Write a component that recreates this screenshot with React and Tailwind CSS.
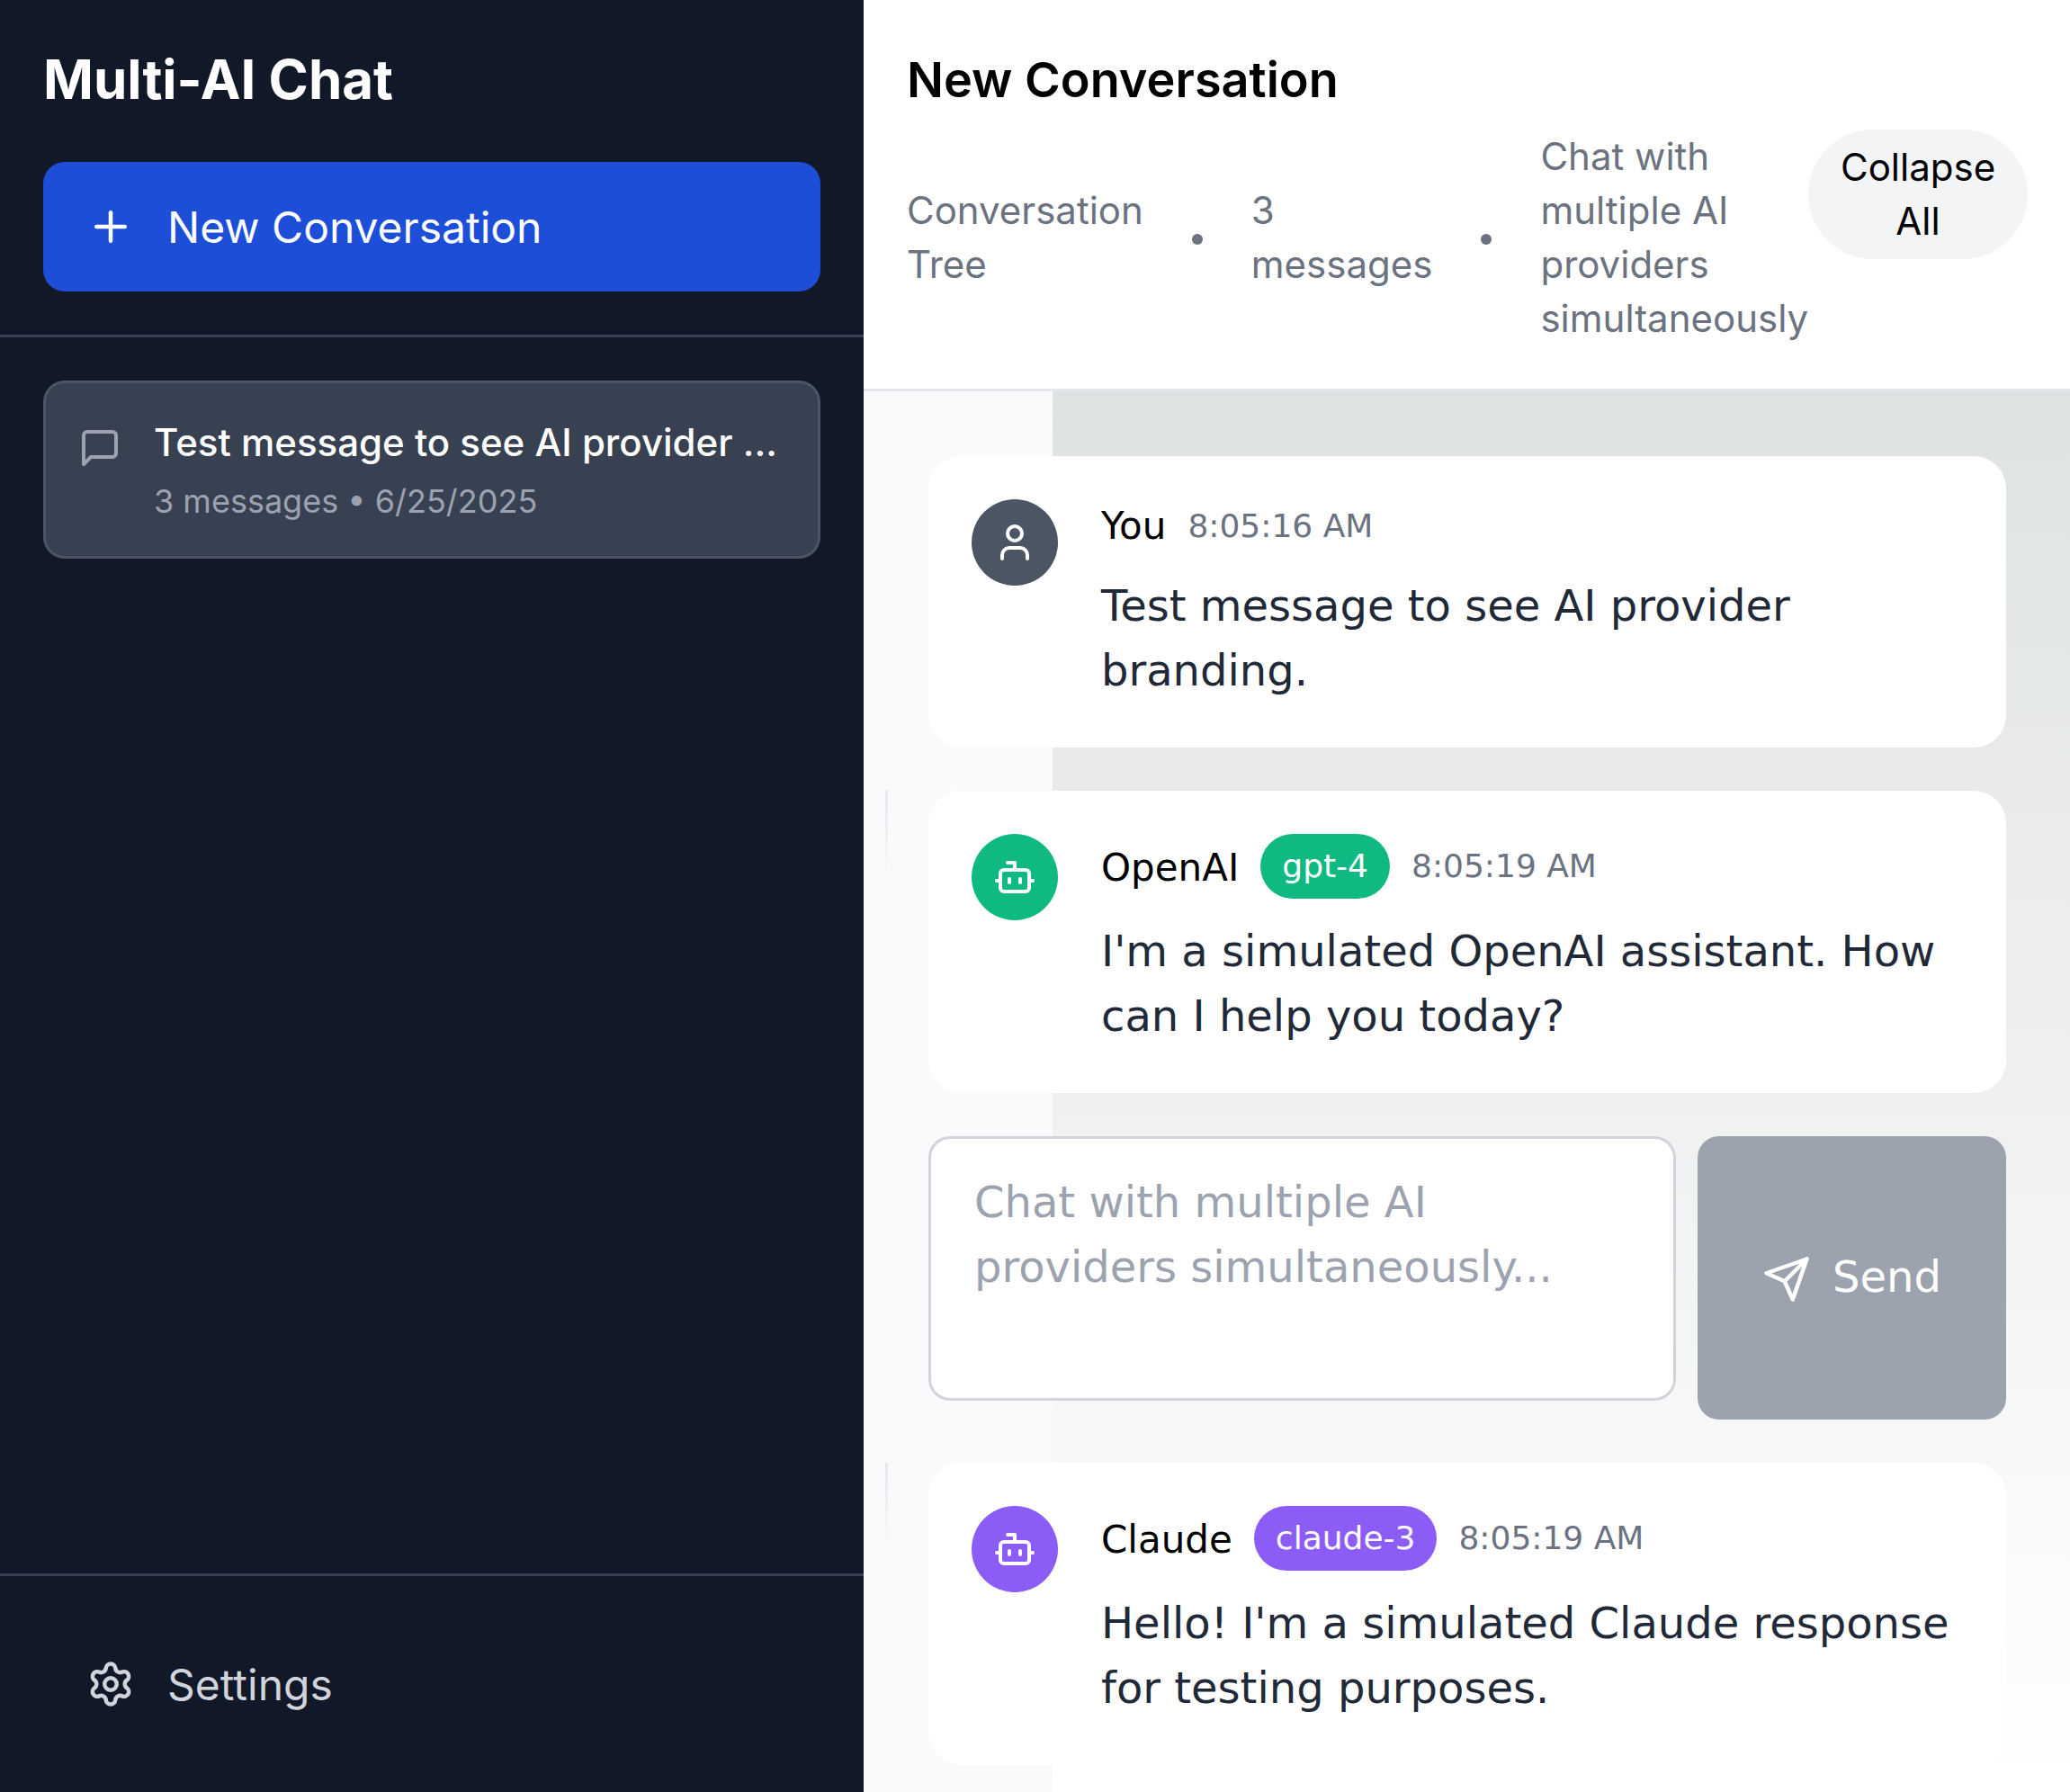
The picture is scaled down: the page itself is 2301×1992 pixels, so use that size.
import React from "react";
import { Plus, Settings, User, Bot } from "lucide-react";

const inter = "font-['Inter',sans-serif]";

const ChatIcon = () => (
  <svg width="48" height="48" viewBox="0 0 24 24" fill="none" stroke="#9ca3af" strokeWidth="2" strokeLinecap="round" strokeLinejoin="round" className="mt-3 shrink-0">
    <path d="M21 15a2 2 0 0 1-2 2H7l-4 4V5a2 2 0 0 1 2-2h14a2 2 0 0 1 2 2z" />
  </svg>
);

const SendIcon = () => (
  <svg width="54" height="54" viewBox="0 0 24 24" fill="none" stroke="currentColor" strokeWidth="2" strokeLinecap="round" strokeLinejoin="round" className="mt-[2px] shrink-0">
    <path d="m22 2-7 20-4-9-9-4Z" />
    <path d="M22 2 11 13" />
  </svg>
);

const Sidebar = () => (
  <aside className={`${inter} w-[960px] shrink-0 h-[1992px] bg-[#111827] flex flex-col`}>
    <div className="p-12 border-b-[3px] border-[#374151]">
      <h1 className="text-[60px] leading-[81px] font-bold text-white">Multi-AI Chat</h1>
      <button className="mt-[51px] w-full h-[144px] bg-[#1d4ed8] rounded-[24px] flex items-center gap-9 px-12 text-white text-[48px]">
        <Plus size={54} strokeWidth={2} />
        <span className="mt-[2px]">New Conversation</span>
      </button>
    </div>
    <div className="flex-1 p-12">
      <div className="bg-[#374151] border-[3px] border-[#4b5563] rounded-[24px] px-9 py-9 flex gap-9">
        <ChatIcon />
        <div className="min-w-0 flex-1">
          <div className="truncate text-[42px] leading-[60px] font-medium text-white">
            Test message to see AI provider branding.
          </div>
          <div className="mt-[11px] mb-[1px] text-[36px] leading-[48px] text-[#9ca3af]">3 messages • 6/25/2025</div>
        </div>
      </div>
    </div>
    <div className="border-t-[3px] border-[#374151] p-12">
      <button className="w-full h-[144px] flex items-center gap-9 px-12 text-[#d1d5db] text-[48px]">
        <Settings size={54} strokeWidth={2} />
        <span className="mt-[2px]">Settings</span>
      </button>
    </div>
  </aside>
);

const Badge = ({ color, children }) => (
  <span className={`${color} text-white text-[36px] leading-[48px] px-6 py-3 rounded-full`}>{children}</span>
);

const Message = ({ avatar, icon, name, model, modelColor, time, lines, thread }) => (
  <div className="relative">
    {thread && (
      <div className="absolute left-[-48px] top-0 w-[3px] h-[96px] bg-gradient-to-b from-[#e5e7eb] to-transparent" />
    )}
    <div className="bg-white rounded-[36px] p-12 flex gap-12">
      <div className={`${avatar} w-24 h-24 rounded-full shrink-0 flex items-center justify-center text-white`}>{icon}</div>
      <div className="flex-1 min-w-0">
        <div className="flex items-center gap-6 mb-[22px]">
          <span className={model ? "mt-[3px] text-[42px] leading-[60px] text-black" : "text-[42px] leading-[60px] text-black"}>{name}</span>
          {model && <Badge color={modelColor}>{model}</Badge>}
          <span className="text-[36px] leading-[48px] text-[#6b7280]">{time}</span>
        </div>
        <p className="mb-[2px] text-[48px] leading-[72px] text-[#1f2937]">{lines}</p>
      </div>
    </div>
  </div>
);

const Dot = () => <span className="w-3 h-3 shrink-0 mt-1 rounded-full bg-[#6b7280]" />;

export default function App() {
  return (
    <div className="flex w-[2301px] h-[1992px] overflow-hidden font-['DejaVu_Sans',sans-serif]">
      <Sidebar />
      <main className="flex-1 min-w-0 flex flex-col bg-[#f9fafb]">
        <header className={`${inter} bg-white border-b-[3px] border-[#e5e7eb] pl-12 pr-[47px] py-12`}>
          <h2 className="text-[54px] leading-[82px] font-semibold text-black">New Conversation</h2>
          <div className="mt-[14px] flex items-start justify-between text-[42px] leading-[60px] text-[#6b7280]">
            <div className="flex items-center gap-[54px] w-[1002px]">
              <span className="w-min">Conversation Tree</span>
              <Dot />
              <span className="w-min">3 messages</span>
              <Dot />
              <span className="w-min">Chat with multiple AI providers simultaneously</span>
            </div>
            <button className="w-[244px] px-9 py-3 rounded-[72px] bg-[#f3f4f6] text-black text-center">Collapse All</button>
          </div>
        </header>
        <div className="relative flex-1 min-h-0 overflow-hidden pl-[72px] pr-[71px] py-[72px]">
          <div className="absolute left-[210px] right-0 top-0 bottom-0 bg-gradient-to-b from-[#dfe2e3] to-white" />
          <div className="relative flex flex-col gap-12">
            <Message
              avatar="bg-[#4b5563]"
              icon={<User size={48} strokeWidth={2} />}
              name="You"
              time="8:05:16 AM"
              lines="Test message to see AI provider branding."
            />
            <Message
              thread
              avatar="bg-[#10b981]"
              icon={<Bot size={48} strokeWidth={2} />}
              name="OpenAI"
              model="gpt-4"
              modelColor="bg-[#10b981]"
              time="8:05:19 AM"
              lines="I'm a simulated OpenAI assistant. How can I help you today?"
            />
            <div className="flex items-start gap-6">
              <textarea
                readOnly
                placeholder="Chat with multiple AI providers simultaneously..."
                className="flex-1 min-w-0 h-[294px] resize-none bg-white border-[3px] border-[#d1d5db] rounded-[24px] px-12 pt-[34px] pb-[38px] text-[48px] leading-[72px] placeholder:text-[#9ca3af] outline-none"
              />
              <button className="w-[343px] h-[315px] shrink-0 bg-[#9ca3af] rounded-[24px] flex items-center justify-center gap-6 text-white text-[48px]">
                <SendIcon />
                <span className="mb-[3px]">Send</span>
              </button>
            </div>
            <Message
              thread
              avatar="bg-[#8b5cf6]"
              icon={<Bot size={48} strokeWidth={2} />}
              name="Claude"
              model="claude-3"
              modelColor="bg-[#8b5cf6]"
              time="8:05:19 AM"
              lines="Hello! I'm a simulated Claude response for testing purposes."
            />
          </div>
        </div>
      </main>
    </div>
  );
}
